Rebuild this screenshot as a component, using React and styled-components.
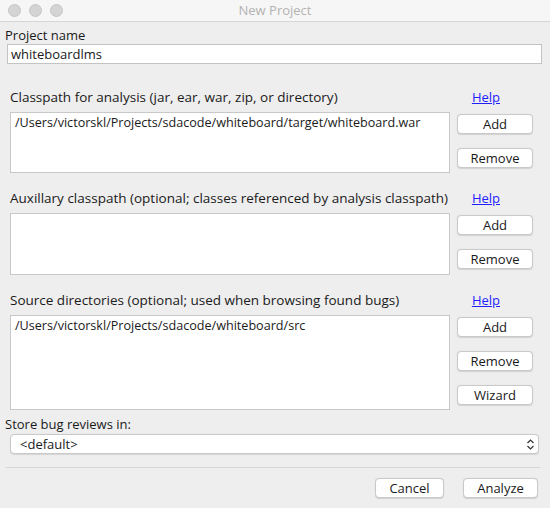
import styled, { createGlobalStyle } from "styled-components";

const GlobalStyle = createGlobalStyle`
  body {
    margin: 0;
    background: #eeeeee;
    font-family: "Open Sans", "DejaVu Sans", sans-serif;
    font-size: 13px;
    color: #1a1a1a;
  }
`;

export default function App() {
  return (
    <Window>
      <GlobalStyle />
      <TitleBar>
        <Lights>
          <Light />
          <Light />
          <Light />
        </Lights>
        <Title>New Project</Title>
      </TitleBar>

      <TopLabel>Project name</TopLabel>
      <NameField>whiteboardlms</NameField>

      <Section first>
        <SectionHead>
          <span>Classpath for analysis (jar, ear, war, zip, or directory)</span>
          <Help>Help</Help>
        </SectionHead>
        <SectionBody>
          <ListBox h={61}>/Users/victorskl/Projects/sdacode/whiteboard/target/whiteboard.war</ListBox>
          <ButtonCol>
            <Btn>Add</Btn>
            <Btn>Remove</Btn>
          </ButtonCol>
        </SectionBody>
      </Section>

      <Section>
        <SectionHead>
          <span>Auxillary classpath (optional; classes referenced by analysis classpath)</span>
          <Help>Help</Help>
        </SectionHead>
        <SectionBody>
          <ListBox h={62} />
          <ButtonCol>
            <Btn>Add</Btn>
            <Btn>Remove</Btn>
          </ButtonCol>
        </SectionBody>
      </Section>

      <Section>
        <SectionHead>
          <span>Source directories (optional; used when browsing found bugs)</span>
          <Help>Help</Help>
        </SectionHead>
        <SectionBody>
          <ListBox h={95}>/Users/victorskl/Projects/sdacode/whiteboard/src</ListBox>
          <ButtonCol>
            <Btn>Add</Btn>
            <Btn>Remove</Btn>
            <Btn>Wizard</Btn>
          </ButtonCol>
        </SectionBody>
      </Section>

      <StoreLabel>Store bug reviews in:</StoreLabel>
      <Select>
        <span>&lt;default&gt;</span>
        <svg width="9" height="13" viewBox="0 0 9 13">
          <path d="M1.5 5 L4.5 2 L7.5 5 M1.5 8 L4.5 11 L7.5 8" fill="none" stroke="#333" strokeWidth="1.2" />
        </svg>
      </Select>

      <Separator />

      <Footer>
        <Btn w={69}>Cancel</Btn>
        <Btn w={75}>Analyze</Btn>
      </Footer>
    </Window>
  );
}

const Window = styled.div`
  width: 550px;
  height: 508px;
  background: #eeeeee;
  display: flex;
  flex-direction: column;
`;

const TitleBar = styled.div`
  height: 21px;
  border-bottom: 1px solid #d6d6d6;
  background: #f6f6f6;
  display: flex;
  align-items: center;
  position: relative;
`;

const Lights = styled.div`
  display: flex;
  gap: 8px;
  padding-left: 8px;
`;

const Light = styled.div`
  width: 11px;
  height: 11px;
  border-radius: 50%;
  background: #d4d4d4;
  border: 0.5px solid #c6c6c6;
`;

const Title = styled.div`
  position: absolute;
  left: 0;
  right: 0;
  text-align: center;
  color: #b3b3b3;
  line-height: 21px;
`;

const TopLabel = styled.div`
  margin: 5px 0 0 5px;
  line-height: 16px;
`;

const NameField = styled.div`
  margin: 1px 0 0 7px;
  width: 535px;
  height: 20px;
  box-sizing: border-box;
  background: #fff;
  border: 1px solid #c3c3c3;
  padding-left: 3px;
  line-height: 18px;
`;

const Section = styled.div`
  margin-top: ${(p) => (p.first ? 25 : 17)}px;
  padding-left: 10px;
  display: flex;
  flex-direction: column;
  gap: 7px;
`;

const SectionHead = styled.div`
  display: flex;
  justify-content: space-between;
  align-items: center;
  line-height: 16px;
  padding-right: 50px;
  font-size: 13.5px;
`;

const Help = styled.a`
  color: #1f1fff;
  text-decoration: underline;
  cursor: pointer;
  font-size: 13px;
`;

const SectionBody = styled.div`
  display: flex;
  gap: 7px;
`;

const ListBox = styled.div`
  width: 440px;
  height: ${(p) => p.h}px;
  box-sizing: border-box;
  background: #fff;
  border: 1px solid #c8c8c8;
  padding: 2px 4px;
  line-height: 16px;
  font-size: 12.6px;
`;

const ButtonCol = styled.div`
  display: flex;
  flex-direction: column;
  gap: 14px;
  padding-top: 2px;
`;

const Btn = styled.button`
  width: ${(p) => p.w || 76}px;
  height: 20px;
  box-sizing: border-box;
  background: #fff;
  border: 1px solid #c9c9c9;
  border-radius: 4px;
  box-shadow: 0 0.5px 1px rgba(0, 0, 0, 0.12);
  font-family: inherit;
  font-size: 13px;
  color: #1a1a1a;
  padding: 0;
  line-height: 18px;
`;

const StoreLabel = styled.div`
  margin: 6px 0 0 5px;
  line-height: 16px;
`;

const Select = styled.div`
  margin: 2px 0 0 10px;
  width: 529px;
  height: 20px;
  box-sizing: border-box;
  background: #fff;
  border: 1px solid #c9c9c9;
  border-radius: 4px;
  box-shadow: 0 0.5px 1px rgba(0, 0, 0, 0.1);
  display: flex;
  align-items: center;
  justify-content: space-between;
  padding: 0 3px 0 9px;
  line-height: 18px;
`;

const Separator = styled.div`
  margin: 13px 0 0 6px;
  width: 534px;
  height: 1px;
  background: #d6d6d6;
`;

const Footer = styled.div`
  margin-top: 10px;
  display: flex;
  justify-content: flex-end;
  gap: 19px;
  padding-right: 12px;
`;
